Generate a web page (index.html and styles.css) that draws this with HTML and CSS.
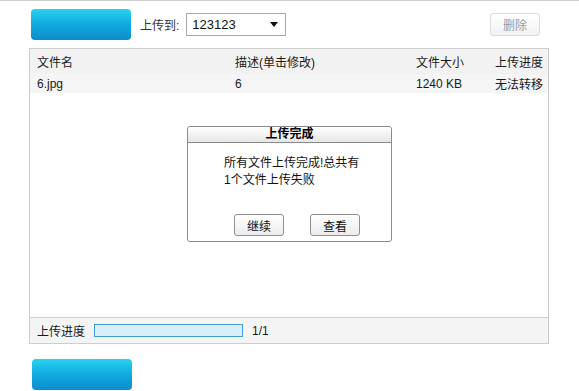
FILE: index.html
```html
<!DOCTYPE html>
<html lang="zh-CN">
<head>
    <meta charset="UTF-8">
    <title>上传文件</title>
    <link rel="stylesheet" href="styles.css">
</head>
<body>
    <div class="toolbar">
        <button class="blue-btn"></button>
        <span class="target-label">上传到:</span>
        <div class="target-select">
            <span>123123</span>
            <span class="arrow"></span>
        </div>
        <button class="del-btn" disabled>删除</button>
    </div>

    <div class="upload-panel">
        <div class="file-row head">
            <span>文件名</span>
            <span>描述(单击修改)</span>
            <span>文件大小</span>
            <span>上传进度</span>
        </div>
        <div class="file-row">
            <span>6.jpg</span>
            <span>6</span>
            <span>1240 KB</span>
            <span>无法转移</span>
        </div>
        <div class="file-body">
            <!-- finished dialog -->
            <div class="dialog">
                <div class="dialog-title">上传完成</div>
                <div class="dialog-msg">所有文件上传完成!总共有<br>1个文件上传失败</div>
                <div class="dialog-btns">
                    <button class="dlg-btn">继续</button>
                    <button class="dlg-btn">查看</button>
                </div>
            </div>
        </div>
        <div class="panel-foot">
            <span>上传进度</span>
            <div class="progress"></div>
            <span class="count">1/1</span>
        </div>
    </div>

    <div class="bottom-bar">
        <button class="blue-btn"></button>
    </div>
</body>
</html>
```

FILE: styles.css
```css
body {
    margin: 0;
    font-family: "Liberation Sans", "Noto Sans CJK SC", sans-serif;
    font-size: 12px;
    color: #1a1a1a;
    background: #fff;
    border-top: 1px solid #cfcfcf;
}
button {
    font-family: inherit;
    font-size: 12px;
    padding: 0;
}
.toolbar {
    display: flex;
    align-items: center;
    height: 47px;
    padding-left: 31px;
    padding-right: 39px;
}
.blue-btn {
    width: 100px;
    height: 31px;
    border: none;
    border-radius: 4px;
    background: linear-gradient(#27d3f0, #11a9e0 50%, #0a8dcc);
}
.toolbar .blue-btn {
    margin-bottom: 1px;
}
.target-label {
    margin-left: 9px;
    color: #333;
}
.target-select {
    display: flex;
    align-items: center;
    justify-content: space-between;
    box-sizing: border-box;
    width: 100px;
    height: 23px;
    margin-left: 7px;
    padding: 0 7px 0 5px;
    border: 1px solid #aaa;
    color: #111;
    font-size: 13px;
}
.arrow {
    width: 0;
    height: 0;
    border-left: 4px solid transparent;
    border-right: 4px solid transparent;
    border-top: 5px solid #111;
}
.del-btn {
    width: 50px;
    height: 23px;
    margin-left: auto;
    border: 1px solid #dcdcdc;
    border-radius: 3px;
    background: linear-gradient(#fff, #f2f2f2);
    color: #9a9a9a;
}
.upload-panel {
    position: relative;
    width: 518px;
    margin-left: 29px;
    border: 1px solid #cdcdcd;
}
.file-row {
    display: grid;
    grid-template-columns: 198px 181px 79px auto;
    align-items: center;
    height: 19px;
    padding-left: 7px;
    background: #f5f5f5;
}
.file-row.head {
    height: 25px;
    background: #f2f2f2;
}
.file-body {
    height: 224px;
    background: #fff;
}
.dialog {
    position: absolute;
    left: 157px;
    top: 77px;
    width: 203px;
    height: 114px;
    border: 1px solid #8a8a8a;
    border-radius: 3px;
    background: #fff;
}
.dialog-title {
    height: 15px;
    line-height: 15px;
    border-bottom: 1px solid #8a8a8a;
    border-radius: 3px 3px 0 0;
    background: linear-gradient(#fff, #e6e6e6);
    text-align: center;
    font-weight: bold;
    color: #000;
}
.dialog-msg {
    margin-top: 12px;
    padding-left: 36px;
    line-height: 17px;
    color: #111;
}
.dialog-btns {
    display: flex;
    gap: 26px;
    margin-top: 25px;
    padding-left: 46px;
}
.dlg-btn {
    width: 50px;
    height: 22px;
    border: 1px solid #8f8f8f;
    border-radius: 3px;
    background: linear-gradient(#fff, #ececec);
    color: #111;
}
.panel-foot {
    display: flex;
    align-items: center;
    height: 25px;
    padding-left: 7px;
    border-top: 1px solid #cdcdcd;
    background: #f4f4f4;
}
.progress {
    width: 147px;
    height: 11px;
    margin-left: 9px;
    border: 1px solid #3d9fd3;
    background: #d8eefb;
}
.count {
    margin-left: 9px;
}
.bottom-bar {
    padding: 15px 0 0 32px;
}
```
